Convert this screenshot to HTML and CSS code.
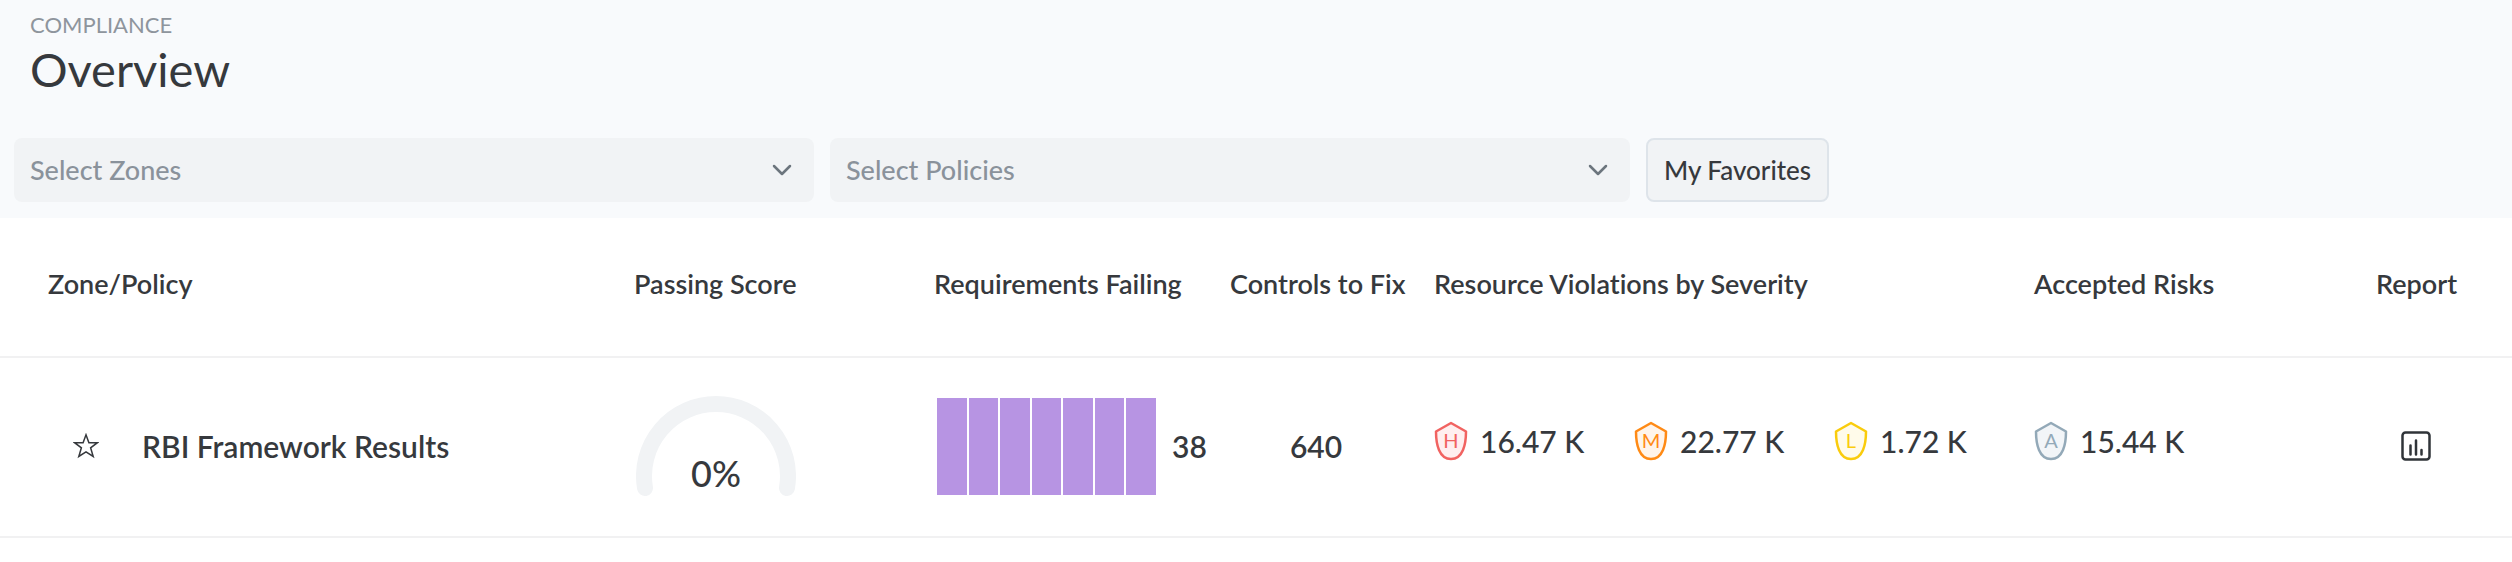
FILE: index.html
```html
<!DOCTYPE html>
<html lang="en">
<head>
<meta charset="utf-8">
<title>Compliance Overview</title>
<link rel="stylesheet" href="styles.css">
</head>
<body>
<header class="page-head">
  <div class="titles">
    <p class="eyebrow">COMPLIANCE</p>
    <h1 class="title">Overview</h1>
  </div>
  <form class="filters">
    <div class="picker">
      <select class="picker-field" aria-label="Zones"><option>Select Zones</option></select>
      <svg class="chevron" viewBox="0 0 20 12" aria-hidden="true"><path d="M2 2l8 8 8-8"/></svg>
    </div>
    <div class="picker">
      <select class="picker-field" aria-label="Policies"><option>Select Policies</option></select>
      <svg class="chevron" viewBox="0 0 20 12" aria-hidden="true"><path d="M2 2l8 8 8-8"/></svg>
    </div>
    <button class="favorites" type="button">My Favorites</button>
  </form>
</header>
<main>
<table class="results">
  <colgroup>
    <col><col class="col-score"><col class="col-failing"><col class="col-controls"><col class="col-violations"><col class="col-risks"><col class="col-report">
  </colgroup>
  <thead>
    <tr>
      <th class="zone-head" scope="col">Zone/Policy</th>
      <th scope="col">Passing Score</th>
      <th scope="col">Requirements Failing</th>
      <th scope="col">Controls to Fix</th>
      <th scope="col">Resource Violations by Severity</th>
      <th scope="col">Accepted Risks</th>
      <th scope="col">Report</th>
    </tr>
  </thead>
  <tbody>
    <tr>
      <td>
        <div class="policy">
          <button class="icon-button" type="button" aria-label="Add to favorites">
            <svg class="star" viewBox="0 0 26 26" aria-hidden="true"><path d="M13 1.800l2.900 7.900h8.500l-6.800 5.100 2.600 8.700-7.200-4.700-7.200 4.700 2.600-8.700-6.800-5.100h8.500z"/></svg>
          </button>
          <span>RBI Framework Results</span>
        </div>
      </td>
      <td>
        <div class="gauge">
          <svg class="gauge-arc" viewBox="0 0 160 102" aria-hidden="true"><path d="M9 93A72 72 0 1 1 151 93"/></svg>
          <span class="gauge-value">0%</span>
        </div>
      </td>
      <td>
        <div class="failing">
          <div class="bars"><i class="bar"></i><i class="bar"></i><i class="bar"></i><i class="bar"></i><i class="bar"></i><i class="bar"></i><i class="bar"></i></div>
          <span>38</span>
        </div>
      </td>
      <td class="controls">640</td>
      <td class="severity-cell">
        <div class="severities">
          <div class="severity high"><svg class="shield" viewBox="0 0 34 40" aria-hidden="true"><path d="M17 2L32 10.500C32 23 29 38 17 38S2 23 2 10.500z"/><text x="17" y="27">H</text></svg><span>16.47 K</span></div>
          <div class="severity medium"><svg class="shield" viewBox="0 0 34 40" aria-hidden="true"><path d="M17 2L32 10.500C32 23 29 38 17 38S2 23 2 10.500z"/><text x="17" y="27">M</text></svg><span>22.77 K</span></div>
          <div class="severity low"><svg class="shield" viewBox="0 0 34 40" aria-hidden="true"><path d="M17 2L32 10.500C32 23 29 38 17 38S2 23 2 10.500z"/><text x="17" y="27">L</text></svg><span>1.72 K</span></div>
        </div>
      </td>
      <td class="severity-cell">
        <div class="severity accepted"><svg class="shield" viewBox="0 0 34 40" aria-hidden="true"><path d="M17 2L32 10.500C32 23 29 38 17 38S2 23 2 10.500z"/><text x="17" y="27">A</text></svg><span>15.44 K</span></div>
      </td>
      <td>
        <div class="report">
          <button class="icon-button" type="button" aria-label="Open report">
            <svg class="report-icon" viewBox="0 0 30 30" aria-hidden="true"><rect x="1.500" y="1.500" width="27" height="27" rx="3"/><path d="M9.500 14.500v9M15 9.500v14M20.500 19v4.500"/></svg>
          </button>
        </div>
      </td>
    </tr>
  </tbody>
</table>
</main>
</body>
</html>
```
FILE: styles.css
```css
* { box-sizing: border-box; }
body { margin: 0; background: #fff; color: #36393d; font-family: Lato, "Open Sans", sans-serif; font-size: 27px; font-variant-ligatures: none; }
button, select { font: inherit; color: inherit; margin: 0; }

.page-head { background: #f8fafc; padding: 11px 14px 16px; }
.titles { padding: 0 16px; }
.eyebrow { margin: 0; font-size: 22px; line-height: 28px; color: #8e959d; }
.title { margin: 0; font-size: 47px; line-height: 60px; font-weight: 400; }

.filters { display: flex; gap: 16px; margin-top: 39px; }
.picker { display: grid; align-items: center; flex: 0 1 800px; }
.picker-field { grid-area: 1 / 1; width: 100%; height: 64px; padding: 0 16px 2px; appearance: none; border: 0; border-radius: 8px; background: #f1f3f5; color: #8a929b; font-weight: 500; }
.chevron { grid-area: 1 / 1; justify-self: end; width: 20px; height: 12px; margin-right: 22px; pointer-events: none; fill: none; stroke: #6c757d; stroke-width: 2.500; stroke-linecap: round; stroke-linejoin: round; }
.favorites { height: 64px; padding: 0 16px; border: 2px solid #dee4ea; border-radius: 8px; background: #f1f3f5; font-size: 26px; font-weight: 500; white-space: nowrap; }

.results { width: 100%; table-layout: fixed; border-collapse: collapse; }
.col-score { width: 300px; }
.col-failing { width: 296px; }
.col-controls { width: 204px; }
.col-violations { width: 600px; }
.col-risks { width: 342px; }
.col-report { width: 152px; }
th { height: 139px; padding: 0 0 8px 16px; border-bottom: 2px solid #f1f1f2; text-align: left; font-weight: 600; white-space: nowrap; }
.zone-head { padding-left: 48px; }
td { height: 180px; padding: 0 0 2px 16px; border-bottom: 2px solid #f1f1f2; font-size: 30px; font-weight: 600; white-space: nowrap; }
.icon-button { display: flex; padding: 0; border: 0; background: none; cursor: pointer; }

.policy { display: flex; align-items: center; gap: 43px; padding-left: 57px; }
.star { width: 26px; height: 26px; fill: none; stroke: #36393d; stroke-width: 1.500; }

.gauge { display: grid; width: 160px; margin-left: 2px; }
.gauge-arc { grid-area: 1 / 1; width: 100%; fill: none; stroke: #f1f3f5; stroke-width: 16; stroke-linecap: round; }
.gauge-value { grid-area: 1 / 1; align-self: end; justify-self: center; font-size: 36px; line-height: 48px; font-weight: 500; }

.failing { display: flex; align-items: center; gap: 16px; }
.bars { display: flex; gap: 2px; width: 222px; height: 97px; padding-left: 3px; }
.bar { flex: 1; background: #b794e3; }
.controls { padding-left: 0; text-align: center; }

.severity-cell { padding-bottom: 12px; }
.severities { display: grid; grid-template-columns: repeat(3, 200px); }
.severity { display: flex; align-items: center; gap: 12px; font-weight: 500; }
.shield { width: 34px; height: 40px; fill: none; stroke: currentColor; stroke-width: 2.500; stroke-linejoin: round; }
.shield text { fill: currentColor; stroke: none; font-size: 20px; font-weight: 400; text-anchor: middle; }
.severity span { color: #36393d; }
.high { color: #f16361; }
.high path { fill: #ffefef; }
.medium { color: #ff8a15; }
.medium path { fill: #fff4ea; }
.low { color: #facc0c; }
.low path { fill: #fffbea; }
.accepted { color: #93a9b8; }
.accepted path { fill: #f2f5f8; }

.report { display: flex; justify-content: center; width: 80px; }
.report-icon { width: 30px; height: 30px; fill: none; stroke: #303439; stroke-width: 2.500; stroke-linecap: round; }
```
